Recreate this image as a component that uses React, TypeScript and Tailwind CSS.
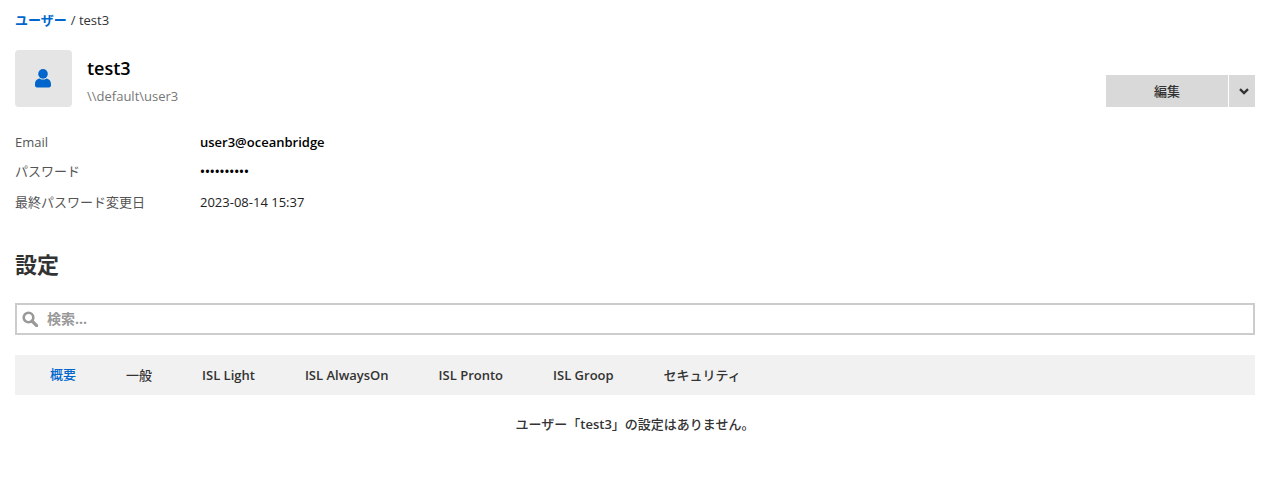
const font = { fontFamily: '"Open Sans", "Noto Sans CJK JP", sans-serif' };

function UserIcon() {
  return (
    <svg width="16" height="19" viewBox="0 0 16 19" className="mr-px fill-[#0066cc]">
      <circle cx="8" cy="4.9" r="4.8" />
      <path d="M0 15C0 11.5 2.5 9.6 4.6 9.4C5.6 10.2 6.8 10.6 8 10.6C9.2 10.6 10.4 10.2 11.4 9.4C13.5 9.6 16 11.5 16 15V16.6C16 17.7 15.2 18.4 14 18.4H2C0.8 18.4 0 17.7 0 16.6Z" />
    </svg>
  );
}

function SearchIcon() {
  return (
    <svg width="16" height="16" viewBox="0 0 16 16" fill="none" className="stroke-[#999999]">
      <circle cx="6.5" cy="6.5" r="4.8" strokeWidth="2.6" />
      <path d="M10 10L14.6 14.6" strokeWidth="3.2" strokeLinecap="round" />
    </svg>
  );
}

function Chevron() {
  return (
    <svg width="10" height="7" viewBox="0 0 10 7" fill="none" className="stroke-[#333333]">
      <path d="M1 1.2L5 5L9 1.2" strokeWidth="2.4" />
    </svg>
  );
}

const tabs = [
  { label: "一般", cls: "font-medium" },
  { label: "ISL Light", cls: "font-semibold" },
  { label: "ISL AlwaysOn", cls: "font-semibold" },
  { label: "ISL Pronto", cls: "font-semibold" },
  { label: "ISL Groop", cls: "font-semibold" },
  { label: "セキュリティ", cls: "font-medium" },
];

export default function App() {
  return (
    <div style={font} className="min-h-[481px] bg-white pr-[19px] pl-[15px] text-[13px] text-[#333333]">
      <div className="flex h-[40px] items-center pt-[1px]">
        <a className="font-semibold text-[#0066cc]">ユーザー</a>
        <span className="ml-[4px]">/ test3</span>
      </div>

      <div className="mt-[10px] flex items-end justify-between">
        <div className="flex">
          <div className="flex h-[57px] w-[57px] items-center justify-center rounded-[4px] bg-[#e5e5e5]">
            <UserIcon />
          </div>
          <div className="ml-[15px]">
            <div className="mt-[5px] text-[18px] leading-[26px] font-semibold text-black">test3</div>
            <div className="mt-[6px] text-[13px] leading-[18px] text-[#777777]">\\default\user3</div>
          </div>
        </div>
        <div className="flex h-[32px]">
          <button className="flex w-[122px] items-center justify-center bg-[#d9d9d9] pt-px font-medium">編集</button>
          <button className="ml-px flex w-[26px] items-center justify-center bg-[#d9d9d9] pl-[4px]">
            <Chevron />
          </button>
        </div>
      </div>

      <div className="mt-[20px] grid grid-cols-[185px_1fr] leading-[30px]">
        <div className="text-[#555555]">Email</div>
        <div className="font-semibold text-black">user3@oceanbridge</div>
        <div className="h-[30px] leading-[28px] text-[#555555]">パスワード</div>
        <div className="h-[30px] leading-[28px] font-semibold text-black">••••••••••</div>
        <div className="text-[#555555]">最終パスワード変更日</div>
        <div className="text-[#222222]">2023-08-14 15:37</div>
      </div>

      <h2 className="mt-[30px] text-[22px] leading-[34px] font-semibold">設定</h2>

      <div className="mt-[22px] flex h-[32px] items-center border-2 border-[#cccccc] pl-[5px]">
        <SearchIcon />
        <span className="mb-[2px] ml-[9px] text-[14px] font-bold text-[#999999]">検索...</span>
      </div>

      <div className="mt-[20px] flex h-[40px] items-center bg-[#f1f1f1] pl-[35px]">
        <span className="mr-[50px] font-medium text-[#0066cc]">概要</span>
        {tabs.map((t) => (
          <span key={t.label} className={"mr-[50px] pt-px " + t.cls}>{t.label}</span>
        ))}
      </div>

      <div className="mt-[20px] text-center leading-[18px] font-medium">
        ユーザー「<span className="font-semibold">test3</span>」の設定はありません。
      </div>
    </div>
  );
}
